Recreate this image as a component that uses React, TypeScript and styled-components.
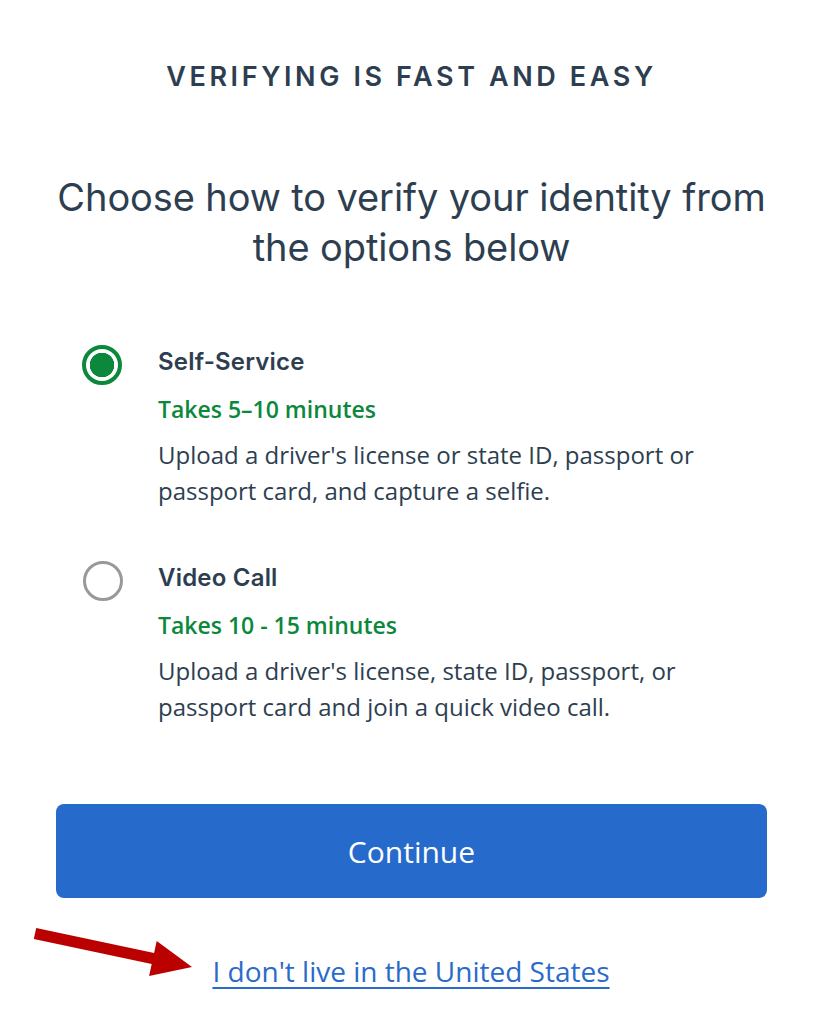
import * as React from 'react';
import styled, { createGlobalStyle } from 'styled-components';

type Option = {
  id: string,
  name: string,
  duration: string,
  description: string,
}

const options: Option[] = [
  {
    id: 'self',
    name: 'Self-Service',
    duration: 'Takes 5–10 minutes',
    description: "Upload a driver's license or state ID, passport or passport card, and capture a selfie.",
  },
  {
    id: 'video',
    name: 'Video Call',
    duration: 'Takes 10 - 15 minutes',
    description: "Upload a driver's license, state ID, passport, or passport card and join a quick video call.",
  },
];

const GlobalStyle = createGlobalStyle`
  html, body {
    margin: 0;
    padding: 0;
    background: #fff;
  }
  * {
    box-sizing: border-box;
  }
`;

export default function App() {
  const [selected, setSelected] = React.useState('self');

  return (
    <React.Fragment>
      <GlobalStyle />
      <Page>
        <Eyebrow>Verifying is fast and easy</Eyebrow>
        <Title>Choose how to verify your identity from the options below</Title>
        <OptionList>
          {options.map((option) => (
            <OptionRow key={option.id} onClick={() => setSelected(option.id)}>
              <Radio data-checked={selected === option.id} />
              <OptionText>
                <OptionName>{option.name}</OptionName>
                <Duration>{option.duration}</Duration>
                <Description>{option.description}</Description>
              </OptionText>
            </OptionRow>
          ))}
        </OptionList>
        <ContinueButton>Continue</ContinueButton>
        <Footer>
          <Arrow width="170" height="65" viewBox="0 0 170 65" aria-hidden>
            <polygon
              points="6.2,6.1 124.1,31.1 126.7,18.9 162,45 119.1,54.1 121.7,41.9 3.8,16.9"
              fill="#bb0000"
            />
          </Arrow>
          <OutsideLink href="#">I don't live in the United States</OutsideLink>
        </Footer>
      </Page>
    </React.Fragment>
  );
}

const Page = styled.main`
  width: 816px;
  padding: 62px 49px 40px 56px;
  display: flex;
  flex-direction: column;
  align-items: center;
  color: #2d3e50;
`;

const Eyebrow = styled.h2`
  margin: 0;
  font-family: Inter, "Noto Sans", sans-serif;
  font-size: 27px;
  line-height: 30px;
  font-weight: 600;
  letter-spacing: 3.6px;
  text-transform: uppercase;
  text-align: center;
`;

const Title = styled.h1`
  margin: 80px 0 0;
  font-family: Inter, "Noto Sans", sans-serif;
  font-size: 38px;
  line-height: 50px;
  font-weight: 400;
  letter-spacing: -0.1px;
  text-align: center;
`;

const OptionList = styled.div`
  align-self: stretch;
  margin-top: 75px;
  padding-left: 26px;
  display: flex;
  flex-direction: column;
  gap: 54px;
`;

const OptionRow = styled.label`
  display: grid;
  grid-template-columns: 40px 1fr;
  column-gap: 36px;
  cursor: pointer;
`;

const Radio = styled.span`
  width: 40px;
  height: 40px;
  margin-top: -2px;
  border-radius: 50%;
  border: 3px solid #999;
  margin-left: 1px;
  &[data-checked="true"] {
    margin-left: 0;
    border: 4px solid #0b883b;
    background: radial-gradient(circle, #0b883b 0 12px, #fff 12.5px);
  }
`;

const OptionText = styled.div`
  display: flex;
  flex-direction: column;
  max-width: 580px;
`;

const OptionName = styled.div`
  font-family: Inter, "Noto Sans", sans-serif;
  font-size: 24px;
  line-height: 30px;
  font-weight: 600;
  letter-spacing: 0.2px;
`;

const Duration = styled.div`
  margin-top: 15px;
  font-family: "Open Sans", sans-serif;
  font-size: 23px;
  line-height: 34px;
  font-weight: 600;
  color: #0b883b;
`;

const Description = styled.p`
  margin: 11px 0 0;
  font-family: "Open Sans", sans-serif;
  font-size: 24px;
  line-height: 36px;
  font-weight: 400;
`;

const ContinueButton = styled.button`
  align-self: stretch;
  margin-top: 79px;
  height: 94px;
  border: none;
  border-radius: 8px;
  background: #266acc;
  color: #fff;
  font-family: "Open Sans", sans-serif;
  font-size: 30px;
  font-weight: 500;
  cursor: pointer;
`;

const Footer = styled.div`
  position: relative;
  align-self: stretch;
  margin: 57px -49px 0 -56px;
  display: flex;
  justify-content: center;
  padding-left: 6px;
`;

const Arrow = styled.svg`
  position: absolute;
  left: 30px;
  top: -33px;
`;

const OutsideLink = styled.a`
  font-family: "Open Sans", sans-serif;
  font-size: 28px;
  line-height: 32px;
  color: #2a6acb;
  text-decoration: underline;
  text-underline-offset: 5px;
  text-decoration-thickness: 2px;
`;
